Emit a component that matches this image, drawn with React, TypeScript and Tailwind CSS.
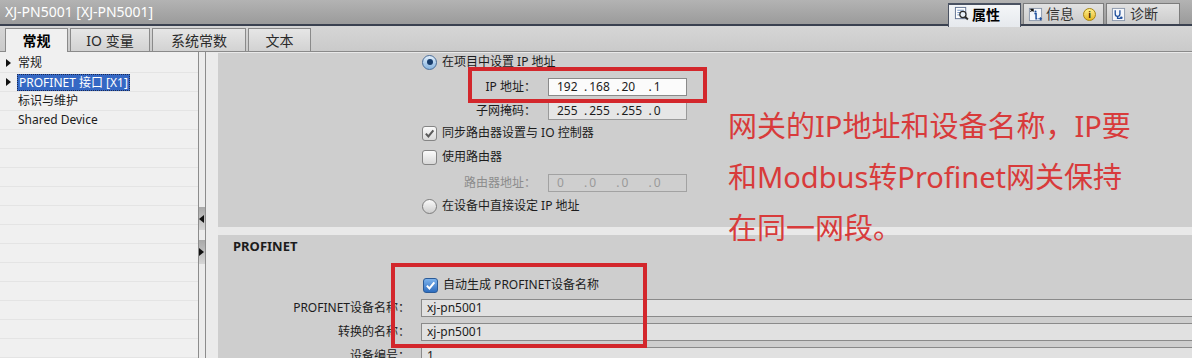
import React from "react";

const ui = "font-['Noto_Sans','Noto_Sans_CJK_SC',sans-serif]";

const Arrow = ({ dir, className = "" }: { dir: "left" | "right"; className?: string }) => (
  <svg viewBox="0 0 5 8" className={`h-[8px] w-[5px] ${className}`}>
    {dir === "right" ? <path d="M0 0 L5 4 L0 8 Z" fill="#111" /> : <path d="M5 0 L0 4 L5 8 Z" fill="#111" />}
  </svg>
);

const Radio = ({ on }: { on?: boolean }) => (
  <span
    className={`flex h-[15px] w-[15px] shrink-0 items-center justify-center rounded-full border ${
      on ? "border-[#4a6d98] bg-gradient-to-b from-[#e2effb] to-[#86b3de]" : "border-[#7d7d7d] bg-gradient-to-b from-[#fafafa] to-[#cdcdcd]"
    }`}
  >
    {on && <span className="h-[6px] w-[6px] rounded-full bg-[#173c6b]" />}
  </span>
);

const Check = ({ on, blue }: { on?: boolean; blue?: boolean }) => (
  <span
    className={`flex h-[15px] w-[15px] shrink-0 items-center justify-center rounded-[3px] border ${
      blue ? "border-[#2b5b98] bg-gradient-to-b from-[#7db3ec] to-[#2d6dbf]" : "border-[#858585] bg-gradient-to-b from-[#fbfbfb] to-[#d8d8d8]"
    }`}
  >
    {on && (
      <svg viewBox="0 0 12 12" className="h-[11px] w-[11px]">
        <path d="M2 6.2 L4.8 9.2 L10.2 2.6" fill="none" stroke={blue ? "#ffffff" : "#5a5a5a"} strokeWidth="2.2" />
      </svg>
    )}
  </span>
);

// IP style field: four segments with dots
const IpField = ({ parts, className }: { parts: string[]; className: string }) => (
  <div className={`flex h-[18px] w-[139px] items-center border pl-[8px] text-[12px] ${className}`}>
    {parts.map((p, i) => (
      <span key={i} className="flex w-[35px]">
        <span className="w-[27px]">{p}</span>
        {i < parts.length - 1 && <span>.</span>}
      </span>
    ))}
  </div>
);

const PropsIcon = () => (
  <svg viewBox="0 0 16 16" className="h-[15px] w-[15px]">
    <rect x="1.5" y="1.5" width="11" height="12" fill="#fff" stroke="#5f7190" />
    <path d="M3.5 4.5h7M3.5 7h5M3.5 9.5h4" stroke="#6d8fc0" />
    <circle cx="9.5" cy="9" r="3.3" fill="#e9f1fa" stroke="#2b2b2b" strokeWidth="1.3" />
    <path d="M11.8 11.4 L14.8 14.4" stroke="#2b2b2b" strokeWidth="2" />
  </svg>
);

const InfoIcon = () => (
  <svg viewBox="0 0 16 16" className="h-[15px] w-[15px]">
    <rect x="1.5" y="1.5" width="13" height="13" fill="#f4f6fa" stroke="#8a97ab" />
    <path d="M2.5 5 L5.5 2.5 M2.5 2.5 L5.5 2.5 L5.5 5" stroke="#111" strokeWidth="1.2" fill="none" />
    <circle cx="8" cy="4.8" r="1.1" fill="#1e4f9c" />
    <path d="M6.8 7h1.8v5.5h1.3" stroke="#1e4f9c" strokeWidth="1.6" fill="none" />
    <path d="M11 12.5h3.2 M12.8 11 L14.3 12.5 L12.8 14" stroke="#1e4f9c" strokeWidth="1.2" fill="none" />
  </svg>
);

const DiagIcon = () => (
  <svg viewBox="0 0 16 16" className="h-[15px] w-[15px]">
    <rect x="1.5" y="1.5" width="13" height="13" fill="#f4f6fa" stroke="#8a97ab" />
    <path d="M4.5 3.5v4a2.5 2.5 0 0 0 5 0v-4" stroke="#1e4f9c" strokeWidth="1.4" fill="none" />
    <path d="M7 10v2.2h3.5" stroke="#1e4f9c" strokeWidth="1.4" fill="none" />
    <circle cx="11" cy="11.5" r="1.4" fill="#1e4f9c" />
  </svg>
);

const TitleBar = () => (
  <div className="flex h-[26px] items-end border-b-2 border-[#3a4150] bg-gradient-to-b from-[#b3b3b3] to-[#9b9b9b]">
    <div className="self-center pl-[5px] text-[14px] leading-none text-white">XJ-PN5001 [XJ-PN5001]</div>
    <div className="ml-auto mr-[12px] flex items-end gap-[2px]">
      <div className="relative z-10 -mb-[3px] flex h-[24px] w-[73px] items-start gap-[3px] border border-b-0 border-t-2 border-[#4a5262] bg-gradient-to-b from-[#f4f6f8] to-[#e6e9ed] pl-[5px] pt-[1px]">
        <PropsIcon />
        <span className="text-[14px] font-bold leading-[17px] text-black">属性</span>
      </div>
      <div className="flex h-[21px] w-[81px] items-center gap-[3px] border border-b-0 border-[#7c7c7c] bg-gradient-to-b from-[#e2e2e2] to-[#cbcbcb] pl-[4px]">
        <InfoIcon />
        <span className="text-[14px] leading-none text-[#333]">信息</span>
        <span className="ml-[6px] flex h-[13px] w-[13px] items-center justify-center rounded-full border border-[#a78410] bg-gradient-to-b from-[#fff08a] to-[#e5b718] text-[9px] font-bold leading-none text-[#3a2a00]">
          i
        </span>
      </div>
      <div className="flex h-[21px] w-[74px] items-center gap-[4px] border border-b-0 border-[#7c7c7c] bg-gradient-to-b from-[#e2e2e2] to-[#cbcbcb] pl-[4px]">
        <DiagIcon />
        <span className="text-[14px] leading-none text-[#333]">诊断</span>
      </div>
    </div>
  </div>
);

const tabs = [
  { label: "常规", w: "w-[63px]", active: true },
  { label: "IO 变量", w: "w-[80px]" },
  { label: "系统常数", w: "w-[94px]" },
  { label: "文本", w: "w-[63px]" },
];

const TabRow = () => (
  <div className="flex h-[26px] items-end gap-[2px] border-b border-[#8a8a8a] bg-gradient-to-b from-[#d6d6d6] to-[#cacaca] pl-[5px]">
    {tabs.map((t) =>
      t.active ? (
        <div
          key={t.label}
          className={`relative z-10 -mb-px flex h-[24px] ${t.w} items-center justify-center border border-b-0 border-[#8a8a8a] bg-[#f0f0f0] text-[14px] font-bold text-black`}
        >
          {t.label}
        </div>
      ) : (
        <div
          key={t.label}
          className={`flex h-[23px] ${t.w} items-center justify-center border border-b-0 border-[#8a8a8a] bg-gradient-to-b from-[#e6e6e6] to-[#d2d2d2] text-[14px] text-[#2a2a2a]`}
        >
          {t.label}
        </div>
      )
    )}
  </div>
);

const LeftNav = () => (
  <div className="flex w-[198px] shrink-0 flex-col overflow-hidden bg-[#f0f0f0] pt-[2px] text-[12px] text-[#1c1c1c]">
    <div className="flex h-[19px] shrink-0 items-center border-b border-[#e4e4e4]">
      <Arrow dir="right" className="ml-[6px] mr-[7px]" />
      <span>常规</span>
    </div>
    <div className="flex h-[19px] shrink-0 items-center border-b border-[#e4e4e4]">
      <Arrow dir="right" className="ml-[6px] mr-[6px]" />
      <span className="border border-dotted border-[#1a2a55] bg-[#3568c4] px-[1px] leading-[15px] text-white">PROFINET 接口 [X1]</span>
    </div>
    <div className="flex h-[19px] shrink-0 items-center border-b border-[#e4e4e4] pl-[18px]">标识与维护</div>
    <div className="flex h-[19px] shrink-0 items-center border-b border-[#e4e4e4] pl-[18px]">Shared Device</div>
    {Array.from({ length: 12 }).map((_, i) => (
      <div key={i} className="h-[19px] shrink-0 border-b border-[#e4e4e4]" />
    ))}
  </div>
);

const Splitter = () => (
  <div className="flex w-[8px] shrink-0 flex-col border-x border-[#8c8c8c] bg-[#ececec]">
    <div className="mt-[155px] flex h-[23px] items-center justify-start bg-gradient-to-b from-[#a9a9a9] to-[#d6d6d6]">
      <Arrow dir="left" className="h-[7px] w-[4px]" />
    </div>
    <div className="mt-[10px] flex h-[24px] items-center justify-start bg-gradient-to-b from-[#a9a9a9] to-[#d6d6d6]">
      <Arrow dir="right" className="h-[7px] w-[4px]" />
    </div>
  </div>
);

const UpperSection = () => (
  <div className="mt-[1px] h-[174px] shrink-0 bg-[#cecece] pl-[204px] text-[12px] text-[#1c1c1c]">
    <div className="flex h-[18px] items-center gap-[5px]">
      <Radio on />
      <span>在项目中设置 IP 地址</span>
    </div>
    <div className="mt-[7px] flex h-[18px] items-center">
      <span className="w-[114px] text-right">IP 地址：</span>
      <IpField parts={["192", "168", "20", "1"]} className="ml-[12px] border-[#8a8a8a] bg-[#fbfbfb] text-[#1c1c1c]" />
    </div>
    <div className="mt-[6px] flex h-[18px] items-center">
      <span className="w-[114px] text-right">子网掩码：</span>
      <IpField parts={["255", "255", "255", "0"]} className="ml-[12px] border-[#9a9a9a] bg-[#e6e6e6] text-[#1c1c1c]" />
    </div>
    <div className="mt-[4px] flex h-[18px] items-center gap-[5px]">
      <Check on />
      <span>同步路由器设置与 IO 控制器</span>
    </div>
    <div className="mt-[6px] flex h-[18px] items-center gap-[5px]">
      <Check />
      <span>使用路由器</span>
    </div>
    <div className="mt-[8px] flex h-[18px] items-center">
      <span className="w-[114px] text-right text-[#8c8c8c]">路由器地址：</span>
      <IpField parts={["0", "0", "0", "0"]} className="ml-[12px] border-[#a2a2a2] bg-[#cfcfcf] text-[#9a9a9a]" />
    </div>
    <div className="mt-[5px] flex h-[18px] items-center gap-[5px]">
      <Radio />
      <span>在设备中直接设定 IP 地址</span>
    </div>
  </div>
);

const NameRow = ({ label, value }: { label: string; value: string }) => (
  <div className="flex h-[18px] items-center">
    <span className="w-[192px] shrink-0 text-right">{label}</span>
    <div className="ml-[11px] flex h-[18px] flex-1 items-center border-y border-l border-[#8a8a8a] bg-[#e1e1e1] pl-[5px]">{value}</div>
  </div>
);

const LowerSection = () => (
  <div className="mt-[8px] min-h-0 flex-1 overflow-hidden bg-[#cecece] pt-[4px] text-[12px] text-[#1c1c1c]">
    <div className="flex h-[16px] items-center pl-[15px] text-[13px] font-bold">PROFINET</div>
    <div className="mt-[21px] flex h-[18px] items-center gap-[5px] pl-[205px]">
      <Check on blue />
      <span>自动生成 PROFINET设备名称</span>
    </div>
    <div className="mt-[5px]">
      <NameRow label="PROFINET设备名称：" value="xj-pn5001" />
    </div>
    <div className="mt-[6px]">
      <NameRow label="转换的名称：" value="xj-pn5001" />
    </div>
    <div className="mt-[6px]">
      <NameRow label="设备编号：" value="1" />
    </div>
  </div>
);

export default function App() {
  return (
    <div className={`relative h-[358px] w-[1192px] overflow-hidden bg-[#cecece] ${ui}`}>
      <TitleBar />
      <TabRow />
      <div className="flex h-[306px]">
        <LeftNav />
        <Splitter />
        <div className="w-[12px] shrink-0 bg-[#ebebeb]" />
        <div className="flex min-w-0 flex-1 flex-col bg-[#e9e9e9]">
          <UpperSection />
          <LowerSection />
        </div>
      </div>

      {/* annotation overlays */}
      <div className="pointer-events-none absolute left-[468px] top-[67px] h-[36px] w-[239px] border-[4px] border-[#d3272c]" />
      <div className="pointer-events-none absolute left-[391px] top-[263px] h-[85px] w-[256px] border-[4px] border-[#d3272c]" />
      <div className="pointer-events-none absolute left-[728px] top-[100px] text-[29px] leading-[51px] text-[#d83b3b]">
        <div>网关的IP地址和设备名称，IP要</div>
        <div>和Modbus转Profinet网关保持</div>
        <div>在同一网段。</div>
      </div>
    </div>
  );
}
